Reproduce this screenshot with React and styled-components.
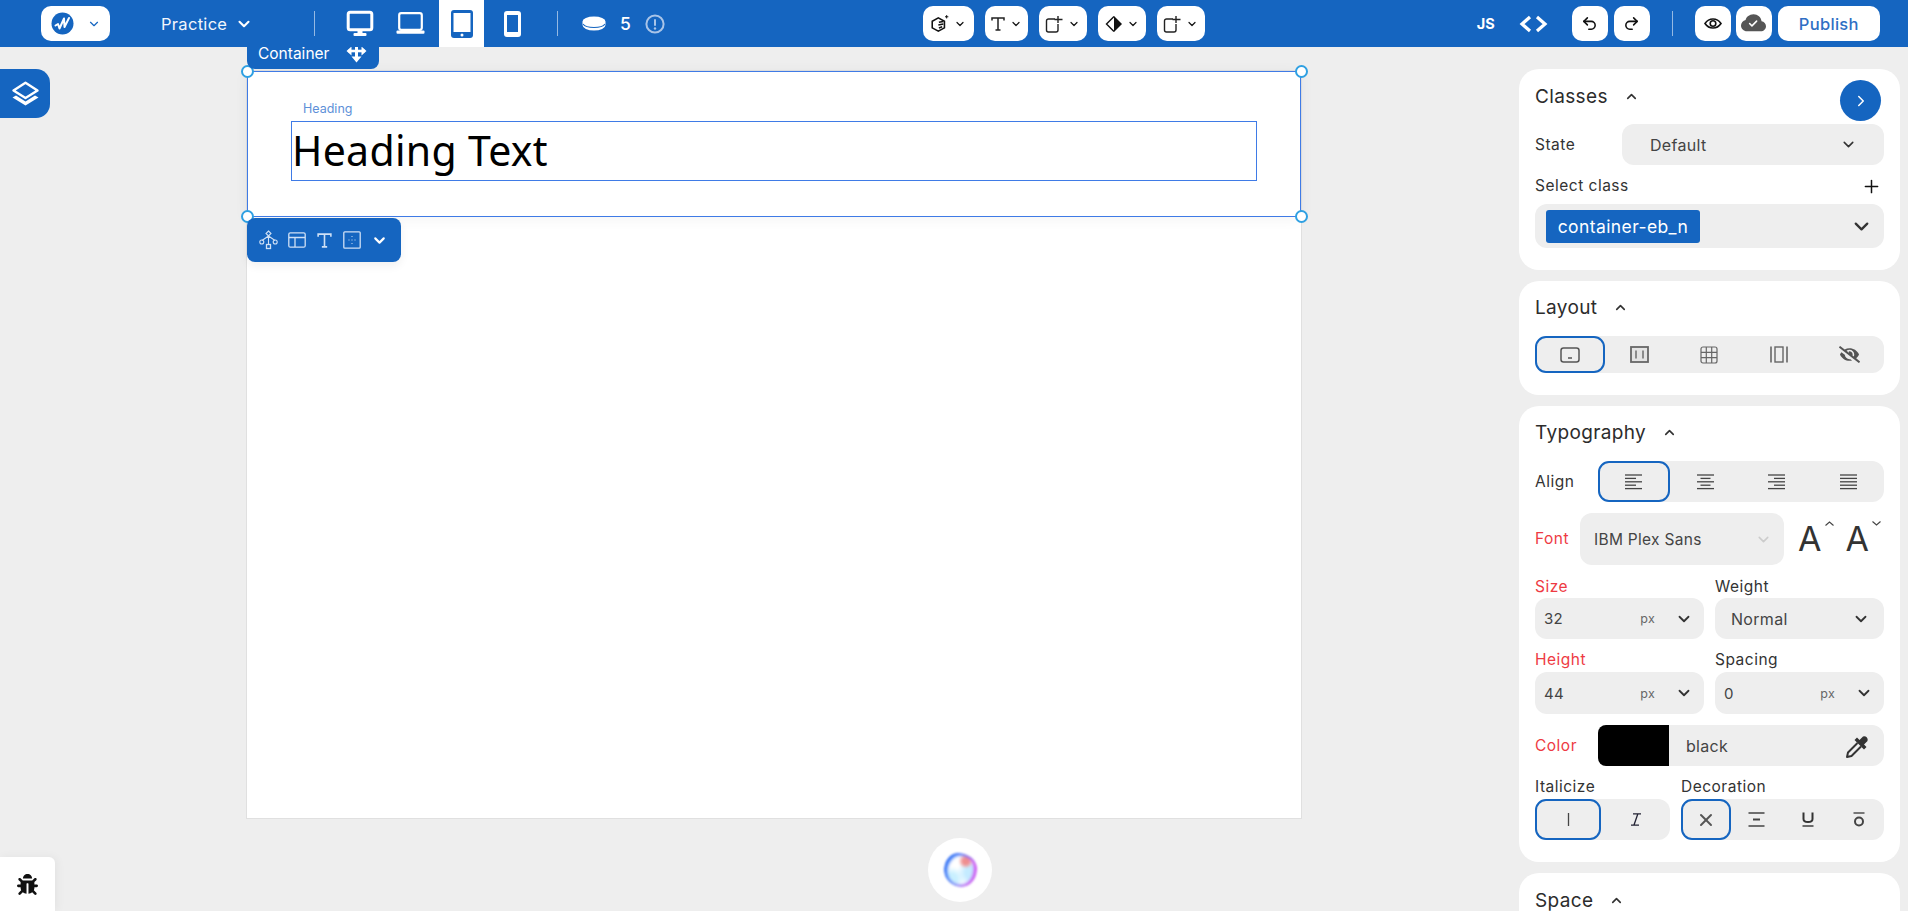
import React from "react";
import styled, { createGlobalStyle } from "styled-components";
import { ChevronDown, ChevronUp, ChevronRight, Plus, X, Undo2, Redo2 } from "lucide-react";
import { FaBug, FaEyeSlash } from "react-icons/fa";
import { BsCloudCheckFill } from "react-icons/bs";

const BLUE = "#1565c0";
const GREY = "#eeeeee";
const FONT = `Inter, "Noto Sans", sans-serif`;

const Global = createGlobalStyle`
  html, body { margin: 0; padding: 0; height: 100%; background: ${GREY}; }
  * { box-sizing: border-box; }
  body { font-family: ${FONT}; color: #333; overflow: hidden; }
`;

const Shell = styled.div`
  position: relative;
  width: 1908px;
  height: 911px;
  overflow: hidden;
  background: ${GREY};
`;

/* ---------- top bar ---------- */
const TopBar = styled.header`
  position: relative;
  z-index: 3;
  display: flex;
  align-items: center;
  height: 47px;
  background: ${BLUE};
  color: #fff;
`;
const Cluster = styled.div`
  display: flex;
  align-items: center;
  gap: ${(p) => p.$gap || 0}px;
  margin-left: ${(p) => p.$ml || 0}px;
`;
const WhiteBtn = styled.button`
  display: flex;
  align-items: center;
  justify-content: center;
  gap: ${(p) => p.$gap || 0}px;
  width: ${(p) => p.$w}px;
  height: 35px;
  padding: 0;
  border: 0;
  border-radius: 10px;
  background: #fff;
  color: #111;
`;
const PublishBtn = styled(WhiteBtn)`
  margin-left: 1px;
  font: 500 16.5px ${FONT};
  letter-spacing: 0.3px;
  color: #2f6fc4;
`;
const ProjectName = styled.div`
  display: flex;
  align-items: center;
  justify-content: space-between;
  width: 92px;
  font-size: 16.5px;
  letter-spacing: 0.3px;
  color: #f2f6fc;
`;
const VSep = styled.span`
  width: 1px;
  height: 25px;
  margin: 0 22px;
  margin-left: ${(p) => p.$ml || 22}px;
  background: rgba(255, 255, 255, 0.55);
`;
const DeviceTab = styled.div`
  display: flex;
  align-items: center;
  justify-content: center;
  width: 45px;
  height: 47px;
  background: ${(p) => (p.$active ? "#fff" : "transparent")};
`;
const Count = styled.span`
  font-size: 17.5px;
  font-weight: 500;
`;
const JsLabel = styled.span`
  font-size: 14.5px;
  font-weight: 700;
`;

/* ---------- canvas ---------- */
const Workspace = styled.div`
  display: flex;
  height: 864px;
`;
const CanvasArea = styled.main`
  width: 1519px;
  flex: none;
  padding: 24px 0 0 247px;
`;
const Page = styled.div`
  position: relative;
  width: 1054px;
  height: 747px;
  background: #fff;
  box-shadow: 0 0 0 1px #e0e0e0;
`;
const ContainerBox = styled.div`
  position: relative;
  height: 146px;
  padding: 49px 43px 0;
  border: 1px solid #3f7be6;
  box-shadow: 0 2px 14px rgba(0, 0, 0, 0.05);
`;
const Handle = styled.span`
  position: absolute;
  width: 13px;
  height: 13px;
  border-radius: 50%;
  background: #fff;
  border: 2px solid #2fa0e2;
  left: ${(p) => (p.$right ? "auto" : "-7px")};
  right: ${(p) => (p.$right ? "-8px" : "auto")};
  top: ${(p) => (p.$bottom ? "auto" : "-7px")};
  bottom: ${(p) => (p.$bottom ? "-7px" : "auto")};
`;
const ElementTag = styled.div`
  position: absolute;
  top: -24px;
  left: 0;
  z-index: 2;
  display: flex;
  align-items: center;
  gap: 17px;
  width: 132px;
  height: 22px;
  padding: 0 0 10px 11px;
  border-radius: 0 0 8px 8px;
  background: ${BLUE};
  color: #fff;
  font-size: 15.5px;
  line-height: 17px;
`;
const HeadingLabel = styled.div`
  position: absolute;
  top: 29px;
  left: 55px;
  font-size: 12.5px;
  line-height: 16px;
  color: #5d90d8;
`;
const HeadingBox = styled.div`
  height: 60px;
  border: 1px solid #3f7be6;
  font: 400 41px/56px "Noto Sans", "Open Sans", sans-serif;
  letter-spacing: 0.3px;
  color: #000;
`;
const QuickBar = styled.div`
  position: absolute;
  top: 147px;
  left: 0;
  z-index: 2;
  display: flex;
  align-items: center;
  gap: 10px;
  width: 154px;
  height: 44px;
  padding-left: 12px;
  border-radius: 8px;
  background: ${BLUE};
  color: #cfe0f5;
  box-shadow: 0 4px 10px rgba(0, 0, 0, 0.06);
`;
const LayersBtn = styled.button`
  position: absolute;
  top: 69px;
  left: 0;
  display: flex;
  align-items: center;
  justify-content: center;
  width: 50px;
  height: 49px;
  padding: 0;
  border: 0;
  border-radius: 0 14px 14px 0;
  background: ${BLUE};
`;
const BugBtn = styled.button`
  position: absolute;
  left: 0;
  bottom: 0;
  display: flex;
  align-items: center;
  justify-content: center;
  width: 55px;
  height: 54px;
  padding: 0;
  border: 0;
  border-radius: 0 6px 0 0;
  background: #fff;
  color: #111;
  box-shadow: 2px 0 10px rgba(0, 0, 0, 0.05);
`;
const OrbBtn = styled.div`
  position: absolute;
  left: 928px;
  top: 838px;
  display: flex;
  align-items: center;
  justify-content: center;
  width: 64px;
  height: 64px;
  border-radius: 50%;
  background: #fff;
`;
const Orb = styled.div`
  width: 33px;
  height: 34px;
  border-radius: 42% 58% 46% 54% / 50% 46% 54% 50%;
  background:
    radial-gradient(circle at 66% 24%, #ef8f8f 0 9%, transparent 22%),
    radial-gradient(circle at 82% 58%, #c4ebff 0 18%, transparent 42%),
    radial-gradient(circle at 24% 76%, #c9f0ff 0 14%, transparent 34%),
    #ffffff;
  box-shadow:
    inset 3px 2px 3px #2a6cf5,
    inset -3px 0 3px #d24cf0,
    inset 0 -2px 3px #8f8ff5;
  filter: blur(0.9px);
`;

/* ---------- side panel ---------- */
const Panel = styled.aside`
  display: flex;
  flex-direction: column;
  gap: 11px;
  width: 381px;
  padding-top: 22px;
`;
const Card = styled.section`
  position: relative;
  flex: none;
  padding: ${(p) => p.$pt}px 16px 22px;
  border-radius: 20px;
  background: #fff;
`;
const CardHead = styled.div`
  display: flex;
  align-items: center;
  gap: 16px;
  height: 27px;
  font-size: 19px;
  letter-spacing: 0.35px;
  color: #2c2c2c;
  margin-bottom: ${(p) => p.$mb ?? 15}px;
`;
const CollapseBtn = styled.button`
  position: absolute;
  top: 11px;
  right: 19px;
  display: flex;
  align-items: center;
  justify-content: center;
  width: 41px;
  height: 41px;
  padding: 0;
  border: 0;
  border-radius: 50%;
  background: ${BLUE};
  color: #fff;
`;
const Row = styled.div`
  display: flex;
  align-items: center;
  justify-content: space-between;
  margin-top: ${(p) => p.$mt || 0}px;
  height: ${(p) => (p.$h ? `${p.$h}px` : "auto")};
`;
const Label = styled.span`
  font-size: 15.5px;
  line-height: 20px;
  letter-spacing: 0.5px;
  color: ${(p) => (p.$red ? "#ee3a43" : "#333")};
`;
const FontLabel = styled(Label)`
  flex: none;
  width: 45px;
`;
const Field = styled.div`
  display: flex;
  align-items: center;
  justify-content: space-between;
  flex: none;
  width: ${(p) => (p.$w ? `${p.$w}px` : "100%")};
  height: ${(p) => p.$h || 41}px;
  margin-top: ${(p) => p.$mt || 0}px;
  padding: 0 ${(p) => p.$pr ?? 11}px 0 ${(p) => p.$pl ?? 9}px;
  border-radius: 12px;
  background: ${GREY};
  font-size: ${(p) => p.$fs || 16}px;
  letter-spacing: 0.3px;
  color: #444;
`;
const Unit = styled.span`
  margin-left: auto;
  margin-right: 20px;
  font-size: 12.5px;
  color: #666;
`;
const ClassChip = styled.span`
  display: flex;
  align-items: center;
  justify-content: center;
  width: 154px;
  height: 33px;
  border-radius: 3px;
  background: ${BLUE};
  color: #fff;
  font-size: 17.5px;
  letter-spacing: 0.4px;
`;
const Segments = styled.div`
  display: flex;
  flex: none;
  width: ${(p) => (p.$w ? `${p.$w}px` : "100%")};
  height: ${(p) => p.$h || 41}px;
  border-radius: 12px;
  background: ${GREY};
`;
const Segment = styled.div`
  display: flex;
  align-items: center;
  justify-content: center;
  flex: ${(p) => (p.$w ? "none" : "1")};
  width: ${(p) => (p.$w ? `${p.$w}px` : "auto")};
  border-radius: 11px;
  border: 2px solid ${(p) => (p.$active ? BLUE : "transparent")};
  color: #555;
`;
const Pair = styled.div`
  display: grid;
  grid-template-columns: 169px 169px;
  column-gap: 11px;
  margin-top: ${(p) => p.$mt}px;
`;
const Stack = styled.div`
  display: flex;
  flex-direction: column;
  gap: ${(p) => p.$gap}px;
`;
const ToolRow = styled.div`
  display: grid;
  grid-template-columns: 135px 203px;
  column-gap: 11px;
  margin-top: 11px;
`;
const ColorSwatch = styled.span`
  width: 71px;
  height: 41px;
  border-radius: 8px 0 0 8px;
  background: #000;
`;
const ColorName = styled.span`
  margin-left: 17px;
  margin-right: auto;
  font-size: 16px;
`;
const FontSizer = styled.span`
  display: flex;
  align-items: flex-start;
  font-size: 34px;
  line-height: 44px;
  color: #333;
  & > svg { margin: 4px 0 0 3px; }
`;
const SizerRow = styled.div`
  display: flex;
  flex: none;
  gap: 12px;
  margin-left: auto;
  padding-right: 3px;
`;

/* ---------- icons ---------- */
const Svg = ({ w, h, vb, children, ...rest }) => (
  <svg width={w} height={h} viewBox={vb || `0 0 ${w} ${h}`} fill="none" {...rest}>
    {children}
  </svg>
);
const Chev = ({ s = 14, c = "currentColor", sw = 2.6 }) => <ChevronDown size={s} color={c} strokeWidth={sw} />;

const LogoMark = () => (
  <Svg w={23} h={23}>
    <circle cx="11.5" cy="11.5" r="11" fill={BLUE} />
    <path d="M4.5 13.5 L7 12 L8.5 16.5 L13 6.5 L13.5 15 L18 6" stroke="#fff" strokeWidth="2" strokeLinejoin="round" strokeLinecap="round" />
  </Svg>
);
const Monitor = () => (
  <Svg w={28} h={27}>
    <rect x="2.2" y="2.2" width="23.6" height="17.6" rx="2" stroke="#fff" strokeWidth="3" />
    <rect x="11.5" y="20" width="5" height="4" fill="#fff" />
    <rect x="7.5" y="23" width="13" height="3" rx="1" fill="#fff" />
  </Svg>
);
const Laptop = () => (
  <Svg w={29} h={23}>
    <rect x="3.2" y="1.2" width="22.6" height="16.6" rx="2" stroke="#fff" strokeWidth="2.2" />
    <rect x="0.5" y="18.5" width="28" height="3.2" rx="1" fill="#fff" />
  </Svg>
);
const Tablet = () => (
  <Svg w={22} h={28}>
    <rect width="22" height="28" rx="3" fill={BLUE} />
    <rect x="2.5" y="3" width="17" height="19" fill="#fff" />
    <circle cx="11" cy="25" r="1.5" fill="#fff" />
  </Svg>
);
const Phone = () => (
  <Svg w={17} h={26}>
    <rect width="17" height="26" rx="3" fill="#fff" />
    <rect x="3" y="4" width="11" height="17" fill={BLUE} />
  </Svg>
);
const Disk = () => (
  <Svg w={24} h={15}>
    <path d="M0.5 5.5 A11.5 5 0 0 1 23.5 5.5 V9 A11.5 5.5 0 0 1 0.5 9 Z" fill="#fff" />
    <path d="M1 8 A11.5 5 0 0 0 23 8" stroke={BLUE} strokeWidth="1.1" />
  </Svg>
);
const Info = () => (
  <Svg w={20} h={20}>
    <circle cx="10" cy="10" r="8.6" stroke="#a9c4e8" strokeWidth="2" />
    <rect x="9" y="5" width="2" height="7" rx="1" fill="#a9c4e8" />
    <circle cx="10" cy="14.5" r="1.2" fill="#a9c4e8" />
  </Svg>
);
const Hex = () => (
  <Svg w={20} h={20} vb="0 0 18 18">
    <path d="M7.5 3.5 L13 6.5 V12.5 L7.5 15.5 L2 12.5 V6.5 Z" stroke="#111" strokeWidth="1.4" />
    <path d="M8 7.5 L12 6.8 M7.5 10 L12 9 M8 12.5 L11 11.5" stroke="#111" strokeWidth="1.4" />
    <path d="M15 1 V4 M13.5 2.5 H16.5" stroke="#111" strokeWidth="0.9" />
  </Svg>
);
const SerifT = ({ c = "#222", s = 16 }) => (
  <Svg w={s} h={s} vb="0 0 16 16">
    <path d="M2 4.5 V2 H14 V4.5 M8 2 V14 M5.5 14 H10.5" stroke={c} strokeWidth="1.5" />
  </Svg>
);
const BoxPlus = () => (
  <Svg w={19} h={18}>
    <path d="M10 4 H3.5 A2 2 0 0 0 1.5 6 V15 A2 2 0 0 0 3.5 17 H11 A2 2 0 0 0 13 15 V9" stroke="#222" strokeWidth="1.4" />
    <path d="M13 1 V8 M9.5 4.5 H17.5" stroke="#222" strokeWidth="1.4" />
  </Svg>
);
const Contrast = () => (
  <Svg w={18} h={18}>
    <path d="M9 1 L17 9 L9 17 Z" fill="#111" />
    <path d="M9 1.5 L1.5 9 L9 16.5" stroke="#111" strokeWidth="1.4" />
  </Svg>
);
const Code = () => (
  <Svg w={29} h={18}>
    <path d="M11 2 L3 9 L11 16 M18 2 L26 9 L18 16" stroke="#fff" strokeWidth="3.2" />
  </Svg>
);
const RingEye = () => (
  <Svg w={18} h={13}>
    <path d="M1 6.5 C5 0.5 13 0.5 17 6.5 C13 12.5 5 12.5 1 6.5 Z" stroke="#111" strokeWidth="1.6" />
    <circle cx="9" cy="6.5" r="2.8" stroke="#111" strokeWidth="1.6" />
  </Svg>
);
const Move = () => (
  <Svg w={21} h={19}>
    <path d="M2 7 H19" stroke="#fff" strokeWidth="2.6" />
    <path d="M10.5 3 V14" stroke="#fff" strokeWidth="3" />
    <path d="M5.5 2.5 V11.5 L0.5 7 Z M15.5 2.5 V11.5 L20.5 7 Z M7 0 H14 L10.5 3 Z M5.5 12.5 H15.5 L10.5 18.5 Z" fill="#fff" />
  </Svg>
);
const Layers = () => (
  <Svg w={29} h={25}>
    <path d="M14.5 1.8 L26.5 9.5 L14.5 17 L2.5 9.5 Z" stroke="#fff" strokeWidth="2.4" strokeLinejoin="round" />
    <path d="M5 14.5 L14.5 20.5 L24 14.5 L27.5 16.5 L14.5 24.5 L1.5 16.5 Z" fill="#fff" />
  </Svg>
);
const Nodes = () => (
  <Svg w={19} h={20}>
    <path d="M9.5 1 L12 3.5 L9.5 6 L7 3.5 Z M9.5 6 V14 M9.5 6 L3 10.5 M9.5 6 L16 10.5" stroke="currentColor" strokeWidth="1.1" />
    <circle cx="2.8" cy="12" r="2" stroke="currentColor" strokeWidth="1.1" />
    <circle cx="16.2" cy="12" r="2" stroke="currentColor" strokeWidth="1.1" />
    <rect x="7.5" y="14.5" width="4" height="4" stroke="currentColor" strokeWidth="1.3" />
  </Svg>
);
const Panels = () => (
  <Svg w={18} h={16}>
    <rect x="0.8" y="0.8" width="16.4" height="14.4" rx="1.5" stroke="currentColor" strokeWidth="1.3" />
    <path d="M1 5.5 H17 M7 5.5 V15" stroke="currentColor" strokeWidth="1.3" />
  </Svg>
);
const DotBox = () => (
  <Svg w={18} h={18}>
    <rect x="0.8" y="0.8" width="16.4" height="16.4" rx="1" stroke="currentColor" strokeWidth="1.3" />
    <path d="M9 5 V6 M9 8.5 V9.5 M9 12 V13 M5.5 9 H6.5 M11.5 9 H12.5" stroke="currentColor" strokeWidth="1" />
  </Svg>
);
const LayoutBlock = () => (
  <Svg w={20} h={16}>
    <rect x="1" y="1" width="18" height="14" rx="2.5" stroke="#555" strokeWidth="1.5" />
    <path d="M8 11 H12" stroke="#555" strokeWidth="1.5" />
  </Svg>
);
const LayoutFlex = () => (
  <Svg w={19} h={17}>
    <rect x="1" y="1" width="17" height="15" stroke="#666" strokeWidth="1.8" fill="#e4e4e4" />
    <path d="M6 4.5 V12.5 M13 4.5 V12.5" stroke="#666" strokeWidth="1.4" />
  </Svg>
);
const LayoutGrid = () => (
  <Svg w={18} h={18}>
    <rect x="1" y="1" width="16" height="16" rx="2" stroke="#666" strokeWidth="1.2" />
    <path d="M6.3 1 V17 M11.7 1 V17 M1 6.3 H17 M1 11.7 H17" stroke="#666" strokeWidth="1.2" />
  </Svg>
);
const LayoutInline = () => (
  <Svg w={18} h={17}>
    <path d="M1 0.5 V16.5 M17 0.5 V16.5" stroke="#666" strokeWidth="1.6" />
    <rect x="5" y="1" width="8" height="15" stroke="#666" strokeWidth="1.4" />
  </Svg>
);
const AlignLines = ({ kind }) => {
  const xs = {
    left: [[0, 17], [0, 11], [0, 17], [0, 11], [0, 17]],
    center: [[0, 17], [3.5, 13.5], [0, 17], [3.5, 13.5], [0, 17]],
    right: [[0, 17], [6, 17], [0, 17], [6, 17], [0, 17]],
    justify: [[0, 17], [0, 17], [0, 17], [0, 17], [0, 17]],
  }[kind];
  return (
    <Svg w={17} h={16}>
      {xs.map(([a, b], i) => (
        <path key={i} d={`M${a} ${1 + i * 3.4} H${b}`} stroke="#444" strokeWidth="1.3" />
      ))}
    </Svg>
  );
};
const Caret = ({ down }) => (
  <Svg w={9} h={5}>
    <path d={down ? "M0.5 0.5 L4.5 4 L8.5 0.5" : "M0.5 4.5 L4.5 1 L8.5 4.5"} stroke="#444" strokeWidth="1.1" />
  </Svg>
);
const NormalI = () => (
  <Svg w={3} h={13}>
    <path d="M1.5 0 V13" stroke="#444" strokeWidth="1.3" />
  </Svg>
);
const ItalicI = () => (
  <Svg w={12} h={13}>
    <path d="M3 0.8 H11 M1 12.2 H9 M7.8 1 L4 12" stroke="#223" strokeWidth="1.3" />
  </Svg>
);
const Strike = () => (
  <Svg w={17} h={15}>
    <path d="M0.5 1 H16.5 M0.5 14 H16.5" stroke="#444" strokeWidth="1.3" />
    <path d="M5 7.5 H12" stroke="#444" strokeWidth="2" />
  </Svg>
);
const UnderlineGlyph = () => (
  <Svg w={12} h={15}>
    <path d="M1.5 0.5 V7 C1.5 11 10.5 11 10.5 7 V0.5" stroke="#333" strokeWidth="2" />
    <path d="M0.5 14 H11.5" stroke="#333" strokeWidth="1.4" />
  </Svg>
);
const OverlineGlyph = () => (
  <Svg w={12} h={15}>
    <path d="M0.5 1 H11.5" stroke="#444" strokeWidth="1.4" />
    <circle cx="6" cy="9.5" r="4" stroke="#444" strokeWidth="2" />
  </Svg>
);
const Dropper = () => (
  <Svg w={26} h={26}>
    <path d="M13 4.5 L15.5 7 L19 3.5 A3.5 3.5 0 0 1 23.5 8 L20 11.5 L22.5 14 L20 16.5 L10.5 7 Z" fill="#333" />
    <path d="M13.5 10 L4 19.5 L3 24 L7.5 23 L17 13.5" stroke="#333" strokeWidth="2" strokeLinejoin="round" />
  </Svg>
);

/* ---------- data ---------- */
const toolButtons = [
  { w: 51, icon: <Hex /> },
  { w: 43, icon: <SerifT /> },
  { w: 48, icon: <BoxPlus /> },
  { w: 48, icon: <Contrast /> },
  { w: 48, icon: <BoxPlus /> },
];
const layoutIcons = [<LayoutBlock />, <LayoutFlex />, <LayoutGrid />, <LayoutInline />, <FaEyeSlash size={21} color="#555" />];
const aligns = ["left", "center", "right", "justify"];

const Head = ({ children, mb }) => (
  <CardHead $mb={mb}>
    {children}
    <ChevronUp size={15} strokeWidth={2.6} color="#333" />
  </CardHead>
);

export default function App() {
  return (
    <Shell>
      <Global />
      <TopBar>
        <Cluster $ml={41} $gap={51}>
          <WhiteBtn $w={69} $gap={13}>
            <LogoMark />
            <Chev s={14} c={BLUE} sw={2} />
          </WhiteBtn>
          <ProjectName>
            Practice
            <Chev s={18} c="#fff" sw={2.8} />
          </ProjectName>
        </Cluster>
        <VSep $ml={61} />
        <Cluster $gap={6}>
          <DeviceTab><Monitor /></DeviceTab>
          <DeviceTab><Laptop /></DeviceTab>
          <DeviceTab $active><Tablet /></DeviceTab>
          <DeviceTab><Phone /></DeviceTab>
        </Cluster>
        <VSep />
        <Cluster $ml={2} $gap={14}>
          <Disk />
          <Count>5</Count>
          <Info />
        </Cluster>
        <Cluster $ml={258} $gap={11}>
          {toolButtons.map((b, i) => (
            <WhiteBtn key={i} $w={b.w} $gap={4}>
              {b.icon}
              <Chev s={12} c="#111" sw={2.4} />
            </WhiteBtn>
          ))}
        </Cluster>
        <Cluster $ml={272} $gap={24}>
          <JsLabel>JS</JsLabel>
          <Code />
          <Cluster $gap={6}>
            <WhiteBtn $w={36}><Undo2 size={17} strokeWidth={2.2} /></WhiteBtn>
            <WhiteBtn $w={36}><Redo2 size={17} strokeWidth={2.2} /></WhiteBtn>
          </Cluster>
        </Cluster>
        <VSep />
        <Cluster $gap={5}>
          <WhiteBtn $w={36}><RingEye /></WhiteBtn>
          <WhiteBtn $w={36}><BsCloudCheckFill size={25} color="#555" /></WhiteBtn>
          <PublishBtn $w={102}>Publish</PublishBtn>
        </Cluster>
      </TopBar>

      <Workspace>
        <CanvasArea>
          <Page>
            <ElementTag>
              Container
              <Move />
            </ElementTag>
            <ContainerBox>
              <Handle />
              <Handle $right />
              <Handle $bottom />
              <Handle $right $bottom />
              <HeadingLabel>Heading</HeadingLabel>
              <HeadingBox>Heading Text</HeadingBox>
            </ContainerBox>
            <QuickBar>
              <Nodes />
              <Panels />
              <SerifT c="currentColor" s={17} />
              <DotBox />
              <Chev s={17} c="#fff" sw={3} />
            </QuickBar>
          </Page>
        </CanvasArea>

        <Panel>
          <Card $pt={14}>
            <CollapseBtn><ChevronRight size={18} strokeWidth={2} /></CollapseBtn>
            <Head mb={14}>Classes</Head>
            <Row>
              <Label>State</Label>
              <Field $w={262} $pl={28} $pr={27}>
                Default
                <Chev s={17} c="#333" sw={2.2} />
              </Field>
            </Row>
            <Row $mt={9} $h={24}>
              <Label>Select class</Label>
              <Plus size={21} strokeWidth={1.7} color="#111" style={{ marginRight: 2 }} />
            </Row>
            <Field $h={44} $pl={11} $pr={11} $mt={6}>
              <ClassChip>container-eb_n</ClassChip>
              <Chev s={23} c="#333" sw={2.4} />
            </Field>
          </Card>

          <Card $pt={13}>
            <Head>Layout</Head>
            <Segments $h={37}>
              {layoutIcons.map((ic, i) => (
                <Segment key={i} $active={i === 0}>{ic}</Segment>
              ))}
            </Segments>
          </Card>

          <Card $pt={13}>
            <Head>Typography</Head>
            <Row>
              <Label>Align</Label>
              <Segments $w={286}>
                {aligns.map((a, i) => (
                  <Segment key={a} $active={i === 0}><AlignLines kind={a} /></Segment>
                ))}
              </Segments>
            </Row>
            <Row $mt={11}>
              <FontLabel $red>Font</FontLabel>
              <Field $w={204} $h={52} $pl={14} $pr={12} $fs={15.5}>
                IBM Plex Sans
                <Chev s={17} c="#ccc" sw={2.2} />
              </Field>
              <SizerRow>
                <FontSizer>A<Caret /></FontSizer>
                <FontSizer>A<Caret down /></FontSizer>
              </SizerRow>
            </Row>
            <Pair $mt={12}>
              <Stack $gap={1}>
                <Label $red>Size</Label>
                <Field $fs={15}>32<Unit>px</Unit><Chev s={18} c="#333" sw={2.4} /></Field>
              </Stack>
              <Stack $gap={1}>
                <Label>Weight</Label>
                <Field $pl={16} $pr={14}>Normal<Chev s={18} c="#333" sw={2.4} /></Field>
              </Stack>
            </Pair>
            <Pair $mt={11}>
              <Stack $gap={2}>
                <Label $red>Height</Label>
                <Field $h={42} $fs={15}>44<Unit>px</Unit><Chev s={18} c="#333" sw={2.4} /></Field>
              </Stack>
              <Stack $gap={2}>
                <Label>Spacing</Label>
                <Field $h={42} $fs={15}>0<Unit>px</Unit><Chev s={18} c="#333" sw={2.4} /></Field>
              </Stack>
            </Pair>
            <Row $mt={11}>
              <Label $red>Color</Label>
              <Field $w={286} $pl={0} $pr={14}>
                <ColorSwatch />
                <ColorName>black</ColorName>
                <Dropper />
              </Field>
            </Row>
            <ToolRow>
              <Stack $gap={2}>
                <Label>Italicize</Label>
                <Segments>
                  <Segment $active $w={66}><NormalI /></Segment>
                  <Segment><ItalicI /></Segment>
                </Segments>
              </Stack>
              <Stack $gap={2}>
                <Label>Decoration</Label>
                <Segments>
                  <Segment $active $w={50}><X size={20} strokeWidth={2.4} color="#555" /></Segment>
                  <Segment><Strike /></Segment>
                  <Segment><UnderlineGlyph /></Segment>
                  <Segment><OverlineGlyph /></Segment>
                </Segments>
              </Stack>
            </ToolRow>
          </Card>

          <Card $pt={14}>
            <Head>Space</Head>
          </Card>
        </Panel>
      </Workspace>

      <LayersBtn><Layers /></LayersBtn>
      <OrbBtn><Orb /></OrbBtn>
      <BugBtn><FaBug size={21} /></BugBtn>
    </Shell>
  );
}
